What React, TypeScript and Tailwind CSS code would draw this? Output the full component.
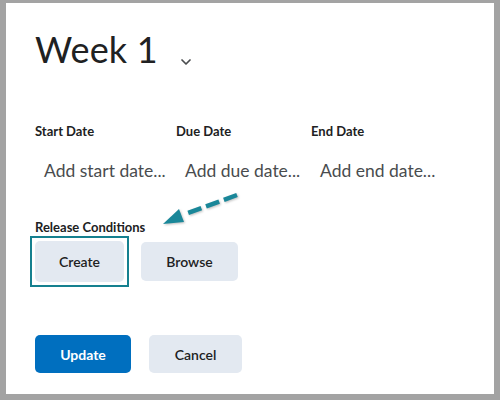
import { ChevronDown } from 'lucide-react';

const DATES = [
    { label: 'Start Date', placeholder: 'Add start date...' },
    { label: 'Due Date', placeholder: 'Add due date...' },
    { label: 'End Date', placeholder: 'Add end date...' },
];

export default function App() {
    return (
        <div className="w-[500px] h-[400px] bg-[#a3a3a3] pt-[3px] px-[6px] pb-[6px] font-['Lato',sans-serif]">
            <div className="relative h-full bg-white pl-[29px]">
                {/* Title */}
                <div className="flex items-end pt-[25px]">
                    <h1 className="text-[36px] leading-[1.2] text-[#202122] tracking-[0.2px]">Week 1</h1>
                    <ChevronDown className="w-[16px] h-[16px] text-[#494c4e] ml-[20px] mb-[1px]" strokeWidth={2.6} />
                </div>

                {/* Dates */}
                <div className="grid grid-cols-[141px_135px_auto] mt-[52px]">
                    {DATES.map((d) => (
                        <div key={d.label} className="flex flex-col">
                            <span className="text-[13px] font-bold leading-[16px] text-[#202122]">{d.label}</span>
                            <span className="text-[17.5px] leading-[22px] text-[#494c4e] pl-[9px] mt-[21px]">{d.placeholder}</span>
                        </div>
                    ))}
                </div>

                {/* Release conditions */}
                <div className="mt-[37px]">
                    <span className="block text-[13px] font-bold leading-[16px] text-[#202122]">Release Conditions</span>
                    <div className="flex gap-[12px] mt-[1px] ml-[-5px]">
                        <div className="border-[2.5px] border-[#15808f] p-[3px] w-[99px] h-[51px]">
                            <button className="w-full h-full rounded-[5px] bg-[#e3e9f1] text-[14px] font-semibold text-[#202122]">Create</button>
                        </div>
                        <button className="mt-[6px] w-[97px] h-[39px] rounded-[5px] bg-[#e3e9f1] text-[14px] font-semibold text-[#202122]">Browse</button>
                    </div>
                </div>

                {/* Footer */}
                <div className="flex gap-[18px] mt-[48px]">
                    <button className="w-[96px] h-[38px] rounded-[5px] bg-[#006fbf] text-[14px] font-bold text-white">Update</button>
                    <button className="w-[93px] h-[38px] rounded-[5px] bg-[#e3e9f1] text-[14px] font-semibold text-[#202122]">Cancel</button>
                </div>

                {/* Annotation arrow */}
                <svg className="absolute left-[151px] top-[186px]" width="90" height="40" viewBox="0 0 90 40">
                    <g style={{ filter: 'drop-shadow(1px 1px 1px rgba(0,0,0,0.25))' }}>
                        <line x1="80" y1="6" x2="31" y2="24" stroke="#1a8799" strokeWidth="4.5" strokeDasharray="14 5" strokeLinecap="butt" />
                        <polygon points="6,35 22,20 27,33" fill="#1a8799" />
                    </g>
                </svg>
            </div>
        </div>
    );
}
